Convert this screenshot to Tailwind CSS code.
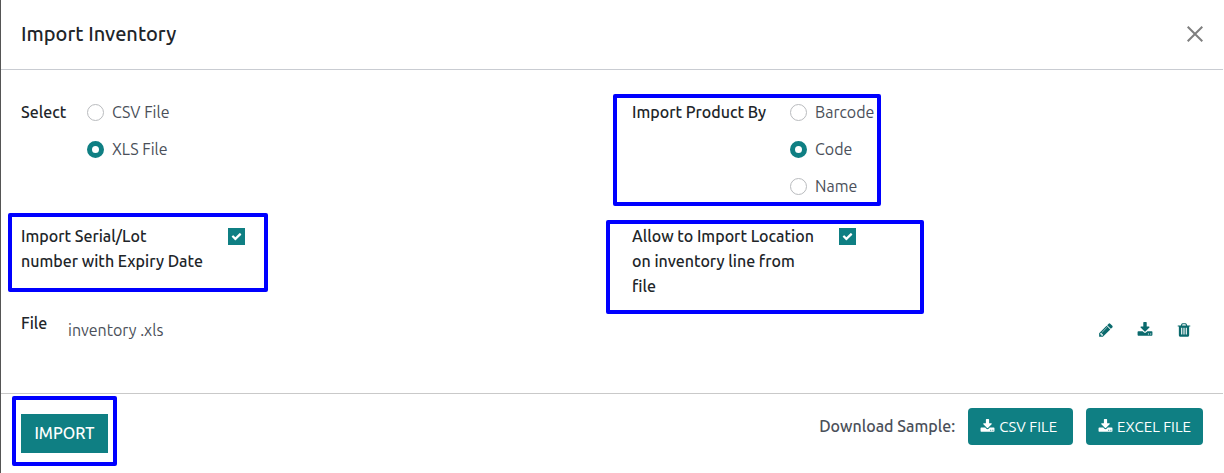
<!DOCTYPE html>
<html lang="en">
<head>
<meta charset="utf-8">
<meta name="viewport" content="width=device-width, initial-scale=1">
<title>Import Inventory</title>
<script src="https://cdn.jsdelivr.net/npm/@tailwindcss/browser@4"></script>
</head>
<body class="bg-white">
<svg class="hidden" aria-hidden="true">
  <symbol id="download" viewBox="0 0 1792 1792"><path d="M1344 1344q0-26-19-45t-45-19-45 19-19 45 19 45 45 19 45-19 19-45zm256 0q0-26-19-45t-45-19-45 19-19 45 19 45 45 19 45-19 19-45zm128-224v320q0 40-28 68t-68 28h-1472q-40 0-68-28t-28-68v-320q0-40 28-68t68-28h465l135 136q58 56 136 56t136-56l136-136h464q40 0 68 28t28 68zm-325-569q17 41-14 70l-448 448q-18 19-45 19t-45-19l-448-448q-31-29-14-70 17-39 59-39h256v-448q0-26 19-45t45-19h256q26 0 45 19t19 45v448h256q42 0 59 39z"/></symbol>
  <symbol id="pencil" viewBox="0 0 1792 1792"><path d="M491 1536l91-91-235-235-91 91v107h128v128h107zm523-928q0-22-22-22-10 0-17 7l-542 542q-7 7-7 17 0 22 22 22 10 0 17-7l542-542q7-7 7-17zm-54-192l416 416-832 832h-416v-416zm683 96q0 53-37 90l-166 166-416-416 166-165q36-38 90-38 53 0 91 38l235 234q37 39 37 91z"/></symbol>
  <symbol id="trash" viewBox="0 0 1792 1792"><path d="M704 1376v-704q0-14-9-23t-23-9h-64q-14 0-23 9t-9 23v704q0 14 9 23t23 9h64q14 0 23-9t9-23zm256 0v-704q0-14-9-23t-23-9h-64q-14 0-23 9t-9 23v704q0 14 9 23t23 9h64q14 0 23-9t9-23zm256 0v-704q0-14-9-23t-23-9h-64q-14 0-23 9t-9 23v704q0 14 9 23t23 9h64q14 0 23-9t9-23zm-544-992h448l-48-117q-7-9-17-11h-317q-10 2-17 11zm928 32v64q0 14-9 23t-23 9h-96v948q0 83-47 143.500t-113 60.500h-832q-66 0-113-58.500t-47-141.500v-952h-96q-14 0-23-9t-9-23v-64q0-14 9-23t23-9h309l70-167q15-37 54-63t79-26h320q40 0 79 26t54 63l70 167h309q14 0 23 9t9 23z"/></symbol>
  <symbol id="check" viewBox="0 0 1792 1792"><path d="M1671 566q0 40-28 68l-724 724-136 136q-28 28-68 28t-68-28l-136-136-362-362q-28-28-28-68t28-68l136-136q28-28 68-28t68 28l294 295 656-657q28-28 68-28t68 28l136 136q28 28 28 68z"/></symbol>
</svg>
<form class="mr-px flex min-h-screen flex-col border-l border-[#555] font-['Ubuntu','Noto_Sans',sans-serif] text-base leading-6 text-[#4a4f59]">
  <header class="flex items-center justify-between border-b border-[#c9ccd2] px-5 pt-5 pb-[21px]">
    <h1 class="text-xl leading-7 font-medium text-[#212529]">Import Inventory</h1>
    <button type="button" aria-label="Close" class="text-[#7f7f7f]">
      <svg class="size-4" viewBox="0 0 16 16" fill="none" stroke="currentColor" stroke-width="2"><path d="M.7.7l14.600 14.600M15.300.7L.7 15.300"/></svg>
    </button>
  </header>

  <main class="grow px-5 pt-[30px] pb-[51px]">
    <div class="grid grid-cols-2 gap-x-10 gap-y-[26px]">
      <fieldset class="flex">
        <legend class="float-left w-[66px] font-medium text-[#212529]">Select</legend>
        <div class="flex flex-col gap-[13px]">
          <label class="flex items-center gap-2"><input type="radio" name="type" class="size-[17px] appearance-none rounded-full border border-[#b9bbbe] checked:border-[5px] checked:border-[#0f7f83]">CSV File</label>
          <label class="flex items-center gap-2"><input type="radio" name="type" checked class="size-[17px] appearance-none rounded-full border border-[#b9bbbe] checked:border-[5px] checked:border-[#0f7f83]">XLS File</label>
        </div>
      </fieldset>
      <fieldset class="relative flex">
        <legend class="float-left w-[158px] font-medium text-[#212529]">Import Product By</legend>
        <div class="flex flex-col gap-[13px]">
          <label class="flex items-center gap-2"><input type="radio" name="by" class="size-[17px] appearance-none rounded-full border border-[#b9bbbe] checked:border-[5px] checked:border-[#0f7f83]">Barcode</label>
          <label class="flex items-center gap-2"><input type="radio" name="by" checked class="size-[17px] appearance-none rounded-full border border-[#b9bbbe] checked:border-[5px] checked:border-[#0f7f83]">Code</label>
          <label class="flex items-center gap-2"><input type="radio" name="by" class="size-[17px] appearance-none rounded-full border border-[#b9bbbe] checked:border-[5px] checked:border-[#0f7f83]">Name</label>
        </div>
        <span class="pointer-events-none absolute -top-1.5 -left-[19px] h-28 w-[268px] rounded-xs border-4 border-[#0000ff]"></span>
      </fieldset>

      <div class="relative flex items-start">
        <label for="serial" class="w-[207px] leading-[25px] font-medium text-[#212529]">Import Serial/Lot<br>number with Expiry Date</label>
        <span class="mt-1 grid place-items-center">
          <input id="serial" type="checkbox" checked class="col-start-1 row-start-1 size-[17px] appearance-none border border-[#b9bbbe] checked:border-[#0f7f83] checked:bg-[#0f7f83]">
          <svg class="pointer-events-none col-start-1 row-start-1 size-[11px] fill-white" aria-hidden="true"><use href="#check"/></svg>
        </span>
        <span class="pointer-events-none absolute -top-[11px] -left-[13px] h-[79px] w-[260px] rounded-xs border-4 border-[#0000ff]"></span>
      </div>
      <div class="relative flex items-start">
        <label for="location" class="w-[207px] leading-[25px] font-medium text-[#212529]">Allow to Import Location<br>on inventory line from<br>file</label>
        <span class="mt-1 grid place-items-center">
          <input id="location" type="checkbox" checked class="col-start-1 row-start-1 size-[17px] appearance-none border border-[#b9bbbe] checked:border-[#0f7f83] checked:bg-[#0f7f83]">
          <svg class="pointer-events-none col-start-1 row-start-1 size-[11px] fill-white" aria-hidden="true"><use href="#check"/></svg>
        </span>
        <span class="pointer-events-none absolute -top-1 -left-[26px] h-[94px] w-[318px] rounded-xs border-4 border-[#0000ff]"></span>
      </div>
    </div>

    <div class="mt-3 flex">
      <span class="w-[47px] font-medium text-[#212529]">File</span>
      <div class="flex grow items-center pt-[7px]">
        <span class="grow">inventory .xls</span>
        <div class="flex gap-[23px] pr-[11px] text-[#0b6a6d]">
          <button type="button" aria-label="Edit"><svg class="size-4 fill-current"><use href="#pencil"/></svg></button>
          <button type="button" aria-label="Download"><svg class="size-4 fill-current"><use href="#download"/></svg></button>
          <button type="button" aria-label="Delete"><svg class="size-4 fill-current"><use href="#trash"/></svg></button>
        </div>
      </div>
    </div>
  </main>

  <footer class="flex justify-between border-t border-[#c9c9c9] px-5 pt-3.5 pb-5">
    <div class="relative mt-1.5 self-start">
      <button type="submit" class="block h-[39px] min-w-[87px] bg-[#0f7f83] px-3 pb-0.5 font-medium text-white">IMPORT</button>
      <span class="pointer-events-none absolute -top-[18px] -left-[9px] h-[70px] w-[105px] rounded-xs border-4 border-[#0000ff]"></span>
    </div>
    <div class="flex items-start gap-[13px]">
      <span class="py-1.5 font-medium">Download Sample:</span>
      <button type="button" class="flex h-[37px] items-center gap-1 rounded-[4px] bg-[#0f7f83] pr-4 pl-3 text-[15px] text-white"><svg class="size-[15px] fill-current"><use href="#download"/></svg>CSV FILE</button>
      <button type="button" class="flex h-[37px] items-center gap-1 rounded-[4px] bg-[#0f7f83] px-3 text-[15px] text-white"><svg class="size-[15px] fill-current"><use href="#download"/></svg>EXCEL FILE</button>
    </div>
  </footer>
</form>
</body>
</html>
